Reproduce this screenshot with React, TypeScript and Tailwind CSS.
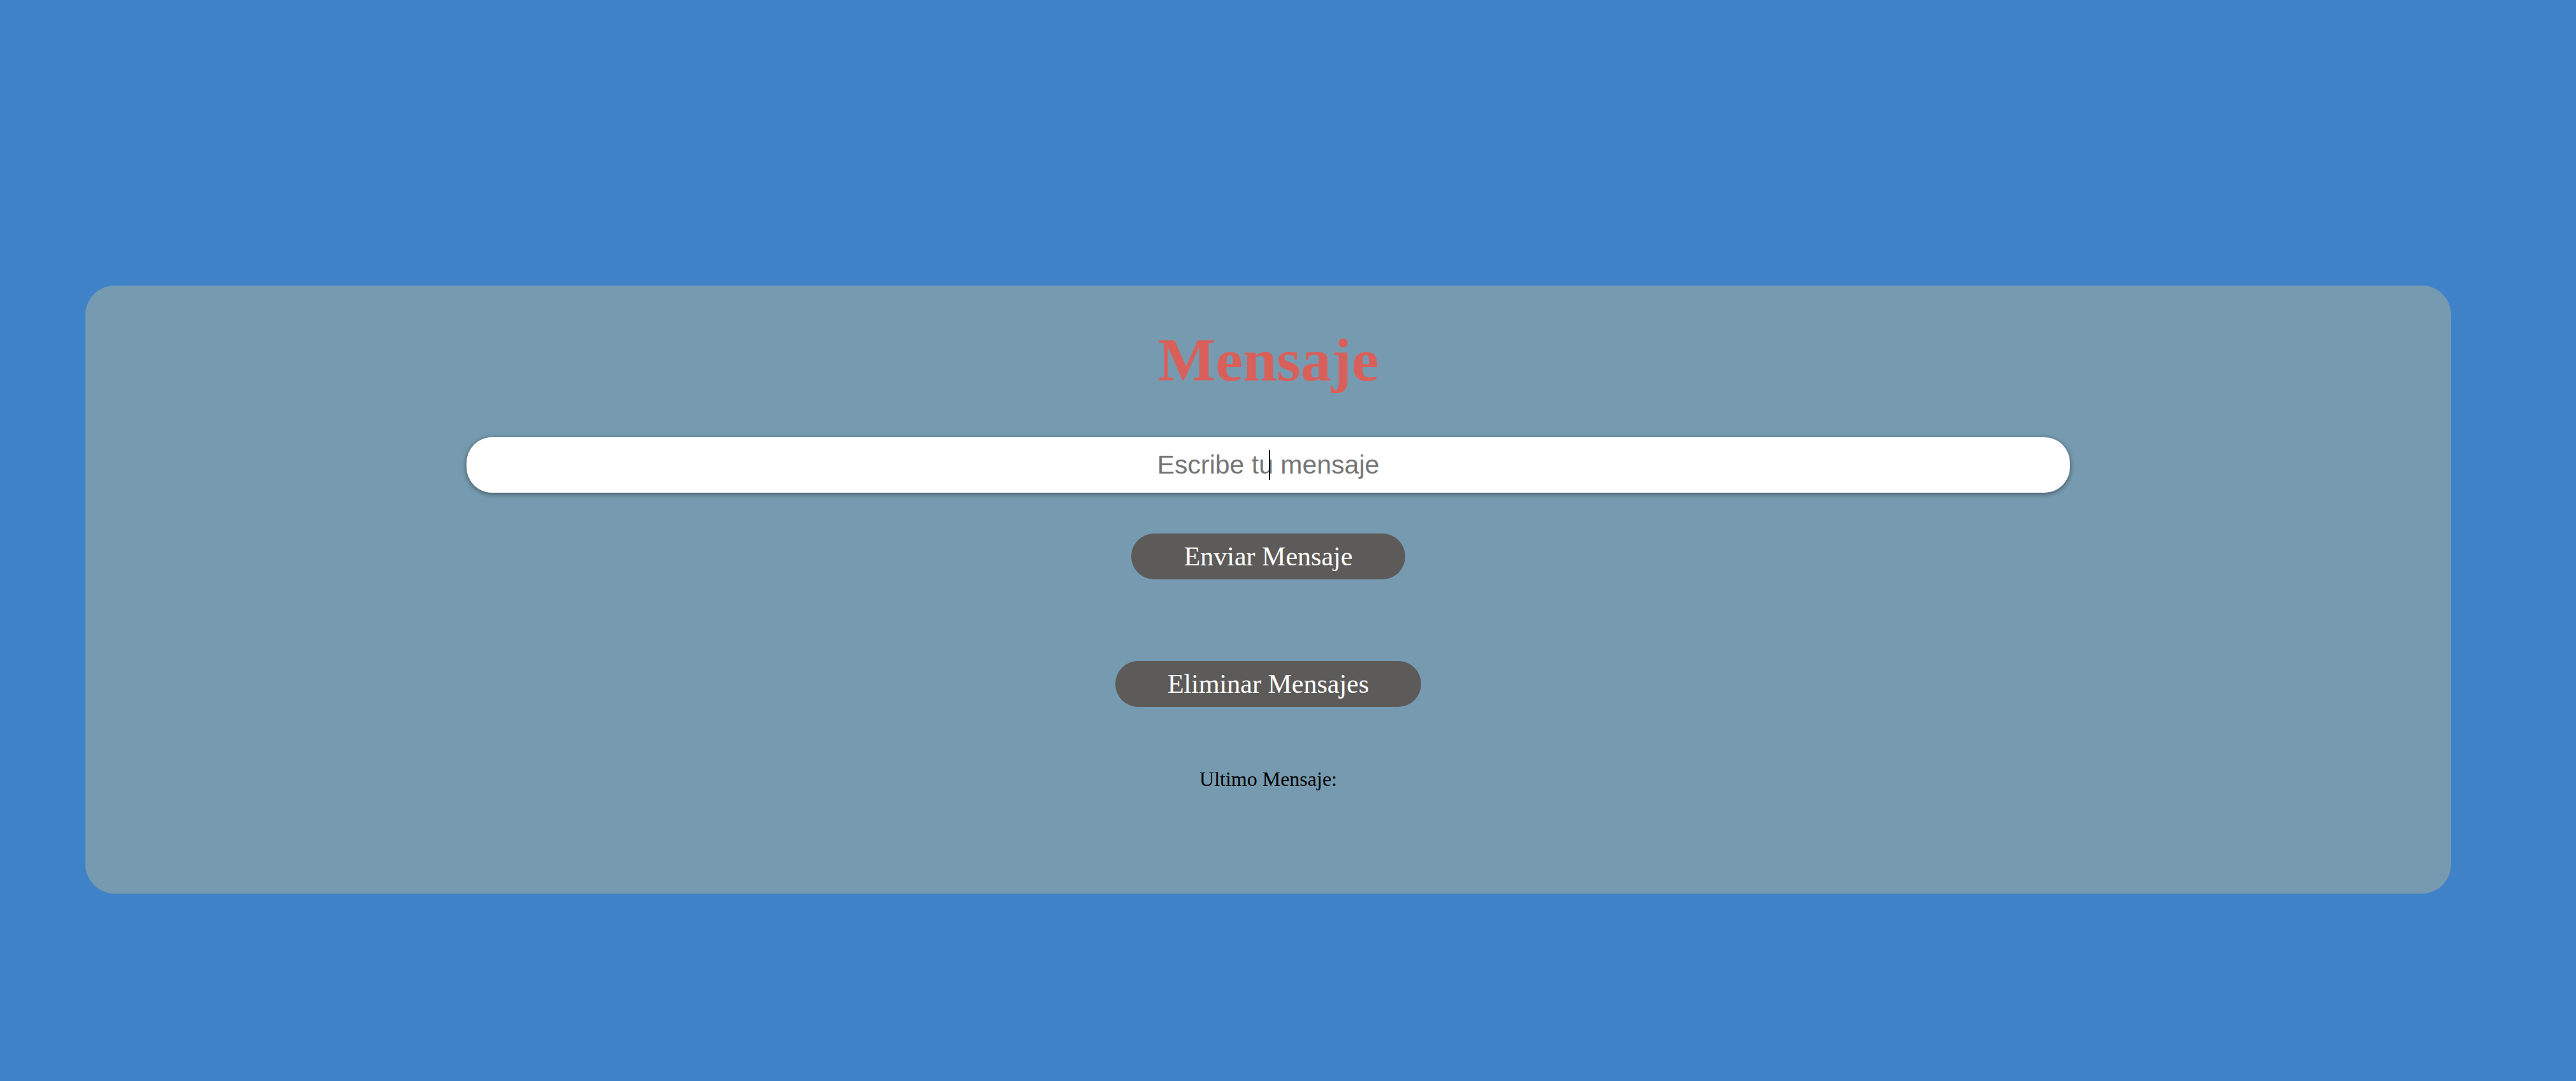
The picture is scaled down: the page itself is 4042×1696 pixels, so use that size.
import { useState } from 'react';

export default function App() {
    const [mensaje, setMensaje] = useState('');

    return (
        <div className="min-h-screen h-[1696px] w-full bg-[#3f82c8] pt-[448px] pl-[134px] font-['Liberation_Serif',serif]">
            <div className="w-[3712px] rounded-[46px] bg-[#769bb0] pt-[69px] pb-[164px] flex flex-col items-center">
                <h1 className="text-[96px] leading-none font-bold text-[#d9605a]">Mensaje</h1>

                <div className="relative mt-[73px] w-[2516px]">
                    <input
                        type="text"
                        value={mensaje}
                        onChange={(e) => setMensaje(e.target.value)}
                        placeholder="Escribe tu mensaje"
                        className="block h-[87px] w-full rounded-[40px] bg-white text-center text-[41px] font-['Liberation_Sans',Arial,sans-serif] text-black placeholder:text-[#757575] outline-none shadow-[0_2px_8px_rgba(0,0,0,0.45)]"
                    />
                    <div className="absolute left-[1259px] top-[20px] h-[47px] w-[2px] bg-black" />
                </div>

                <button className="mt-[64px] h-[72px] rounded-full bg-[#5d5b59] px-[83px] text-[42px] leading-none text-white">
                    Enviar Mensaje
                </button>

                <button className="mt-[128px] h-[72px] rounded-full bg-[#5d5b59] px-[82px] text-[42px] leading-none text-white">
                    Eliminar Mensajes
                </button>

                <p className="mt-[97px] text-[32px] leading-none text-black">Ultimo Mensaje:</p>
            </div>
        </div>
    );
}
